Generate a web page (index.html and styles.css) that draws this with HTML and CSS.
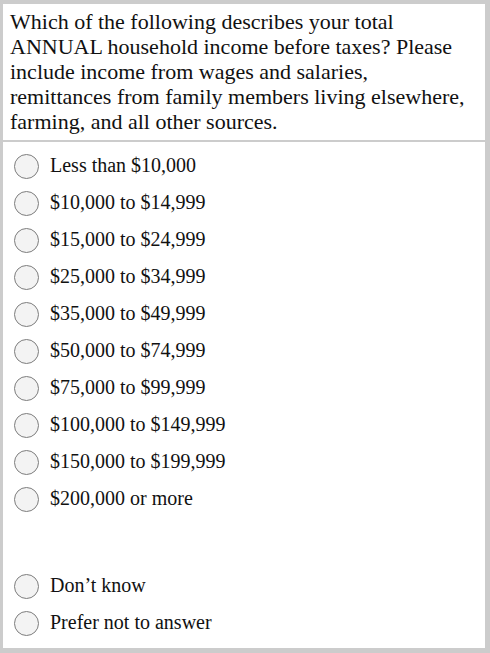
FILE: index.html
```html
<!DOCTYPE html>
<html>
<head>
<meta charset="utf-8">
<link rel="stylesheet" href="styles.css">
</head>
<body>
<div class="page">
  <div class="question">Which of the following describes your total ANNUAL household income before taxes? Please include income from wages and salaries, remittances from family members living elsewhere, farming, and all other sources.</div>
  <div class="options">
    <div class="opt"><span class="radio"></span><span class="label">Less than $10,000</span></div>
    <div class="opt"><span class="radio"></span><span class="label">$10,000 to $14,999</span></div>
    <div class="opt"><span class="radio"></span><span class="label">$15,000 to $24,999</span></div>
    <div class="opt"><span class="radio"></span><span class="label">$25,000 to $34,999</span></div>
    <div class="opt"><span class="radio"></span><span class="label">$35,000 to $49,999</span></div>
    <div class="opt"><span class="radio"></span><span class="label">$50,000 to $74,999</span></div>
    <div class="opt"><span class="radio"></span><span class="label">$75,000 to $99,999</span></div>
    <div class="opt"><span class="radio"></span><span class="label">$100,000 to $149,999</span></div>
    <div class="opt"><span class="radio"></span><span class="label">$150,000 to $199,999</span></div>
    <div class="opt"><span class="radio"></span><span class="label">$200,000 or more</span></div>
    <div class="spacer"></div>
    <div class="opt"><span class="radio"></span><span class="label">Don’t know</span></div>
    <div class="opt"><span class="radio"></span><span class="label">Prefer not to answer</span></div>
  </div>
</div>
</body>
</html>
```
FILE: styles.css
```css
html, body {
  margin: 0;
  padding: 0;
  background: #cccccc;
}
body {
  padding: 4px 5px 5px 3px;
  font-family: "Liberation Serif", "DejaVu Serif", serif;
  color: #111111;
}
.page {
  height: 644px;
  display: flex;
  flex-direction: column;
  gap: 2px;
}
.question {
  background: #ffffff;
  height: 136px;
  box-sizing: border-box;
  padding: 5px 14px 0 7px;
  font-size: 22px;
  line-height: 25px;
}
.options {
  background: #ffffff;
  flex: 1;
  padding-top: 6px;
}
.opt {
  display: flex;
  align-items: center;
  height: 37px;
}
.radio {
  width: 23px;
  height: 23px;
  border-radius: 50%;
  border: 1.5px solid #7d7d7d;
  background: #f3f3f3;
  margin-left: 11px;
  margin-right: 11px;
  flex: none;
}
.label {
  font-size: 20px;
  position: relative;
  top: -1px;
}
.spacer {
  height: 50px;
}
```
